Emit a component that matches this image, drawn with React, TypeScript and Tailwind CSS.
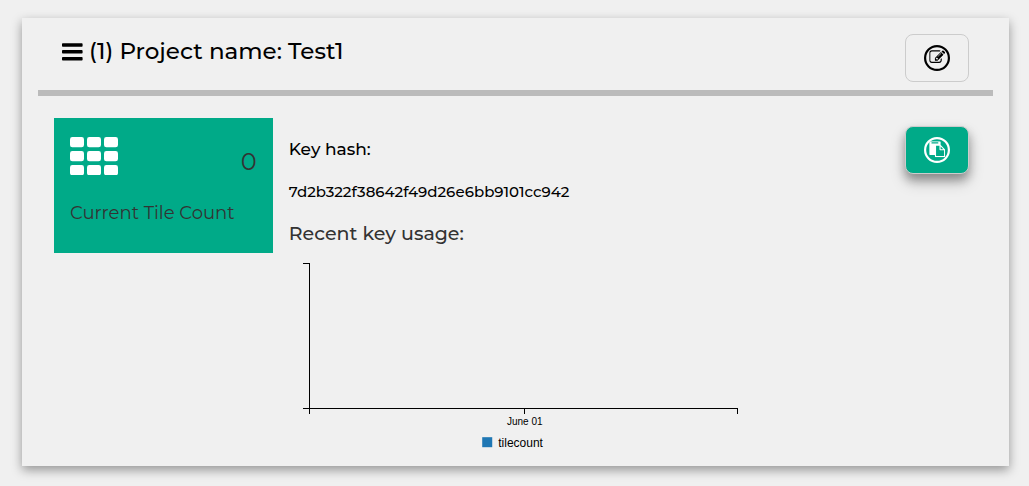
import React from "react";

const tileColumns = [0, 17, 34];
const tileRows = [0, 14, 28];

function BarsIcon() {
  return (
    <svg className="h-[18px] w-[21px] shrink-0" viewBox="0 0 21 18" fill="currentColor" aria-hidden="true">
      <rect x="0" y="0.2" width="20.6" height="3.5" rx="0.8" />
      <rect x="0" y="7.1" width="20.6" height="3.5" rx="0.8" />
      <rect x="0" y="14" width="20.6" height="3.5" rx="0.8" />
    </svg>
  );
}

function TilesIcon() {
  return (
    <svg className="h-[38px] w-12 text-white" viewBox="0 0 48 38" fill="currentColor" aria-hidden="true">
      {tileRows.map((y) =>
        tileColumns.map((x) => <rect key={`${x}-${y}`} x={x} y={y} width="14" height="10.3" rx="2.4" />)
      )}
    </svg>
  );
}

function CircledIcon({ path }: { path: string }) {
  return (
    <svg className="size-[26px]" viewBox="0 0 26 26" fill="none" aria-hidden="true">
      <circle cx="13" cy="13" r="11.9" stroke="currentColor" strokeWidth="2.2" />
      <svg x="5.2" y="4.2" width="16" height="16" viewBox="0 0 1792 1792">
        <path d={path} fill="currentColor" />
      </svg>
    </svg>
  );
}

const editPath =
  "M888 1184l116-116-152-152-116 116v56h96v96h56zm440-720q-16-16-33 1l-350 350q-17 17-1 33t33-1l350-350q17-17 1-33zm80 594v190q0 119-84.5 203.5t-203.5 84.5h-832q-119 0-203.5-84.5t-84.5-203.5v-832q0-119 84.5-203.5t203.5-84.5h832q63 0 117 25 15 7 18 23 3 17-9 29l-49 49q-14 14-32 8-23-6-45-6h-832q-66 0-113 47t-47 113v832q0 66 47 113t113 47h832q66 0 113-47t47-113v-126q0-13 9-22l64-64q15-15 35-7t20 29zm-96-738l288 288-672 672h-288v-288zm444 132l-92 92-288-288 92-92q28-28 68-28t68 28l152 152q28 28 28 68t-28 68z";

const pastePath =
  "M768 1664h896v-640h-416q-40 0-68-28t-28-68v-416h-384v1152zm256-1440v-64q0-13-9.5-22.5t-22.5-9.5h-704q-13 0-22.5 9.5t-9.5 22.5v64q0 13 9.5 22.5t22.5 9.5h704q13 0 22.5-9.5t9.5-22.5zm256 672h299l-299-299v299zm512 128v672q0 40-28 68t-68 28h-960q-40 0-68-28t-28-68v-160h-544q-40 0-68-28t-28-68v-1344q0-40 28-68t68-28h1088q40 0 68 28t28 68v328q21 13 36 28l408 408q28 28 48 76t20 88z";

function UsageChart() {
  return (
    <svg
      className="mt-2 block w-full font-['Liberation_Sans',sans-serif]"
      viewBox="0 0 453 196"
      role="img"
      aria-label="Tile count by day"
    >
      <g stroke="#000" fill="none" shapeRendering="crispEdges">
        <path d="M14 8.5H20.5V153.5H14" />
        <path d="M20.5 159V153.5H448.5V159" />
        <path d="M235.5 153V159" />
      </g>
      <text x="235.5" y="170" textAnchor="middle" className="text-[10px]">
        June 01
      </text>
      <rect x="193" y="182" width="10" height="10" fill="#1f77b4" />
      <text x="209" y="192" className="text-[12px]">
        tilecount
      </text>
    </svg>
  );
}

export default function App() {
  return (
    <main className="min-h-screen bg-[#f0f0f0] px-5 pt-[18px] pb-5 pl-[22px] font-['Montserrat','Inter',sans-serif] text-black">
      <section className="bg-[#f0f0f0] px-4 shadow-[0_4px_10px_0_rgba(0,0,0,0.38)]">
        <header className="flex items-start justify-between border-b-6 border-[#bbbbbb] px-6 pt-4 pb-2">
          <h1 className="flex items-center gap-1.5 text-[23px] leading-[35px] font-medium">
            <BarsIcon />
            (1) Project name: Test1
          </h1>
          <button
            type="button"
            aria-label="Edit project"
            className="flex h-12 w-16 items-center justify-center rounded-lg border border-[#cccccc]"
          >
            <CircledIcon path={editPath} />
          </button>
        </header>

        <div className="grid grid-cols-4 items-start gap-4 px-4 pt-[22px] pb-[15px]">
          <div className="bg-[#00aa88] px-4 pt-[19px] pb-[26px] text-[#333333]">
            <div className="flex items-start justify-between">
              <TilesIcon />
              <p className="pt-[7px] text-2xl leading-9">0</p>
            </div>
            <h2 className="mt-5 text-lg leading-[27px] whitespace-nowrap">Current Tile Count</h2>
          </div>

          <div className="col-span-2 pt-4">
            <h3 className="text-[17px] leading-[30px] font-medium">Key hash:</h3>
            <p className="mt-4 text-[15px] leading-6 font-medium">7d2b322f38642f49d26e6bb9101cc942</p>
            <h3 className="mt-4 text-[19px] leading-[27px] font-medium text-[#333333]">Recent key usage:</h3>
            <UsageChart />
          </div>

          <div className="flex justify-end pt-2 pr-2">
            <button
              type="button"
              aria-label="Copy key hash"
              className="flex h-12 w-16 items-center justify-center rounded-lg border border-[#cccccc] bg-[#00aa88] text-white shadow-[0_8px_16px_0_rgba(0,0,0,0.2),0_6px_10px_0_rgba(0,0,0,0.3)]"
            >
              <CircledIcon path={pastePath} />
            </button>
          </div>
        </div>
      </section>
    </main>
  );
}
